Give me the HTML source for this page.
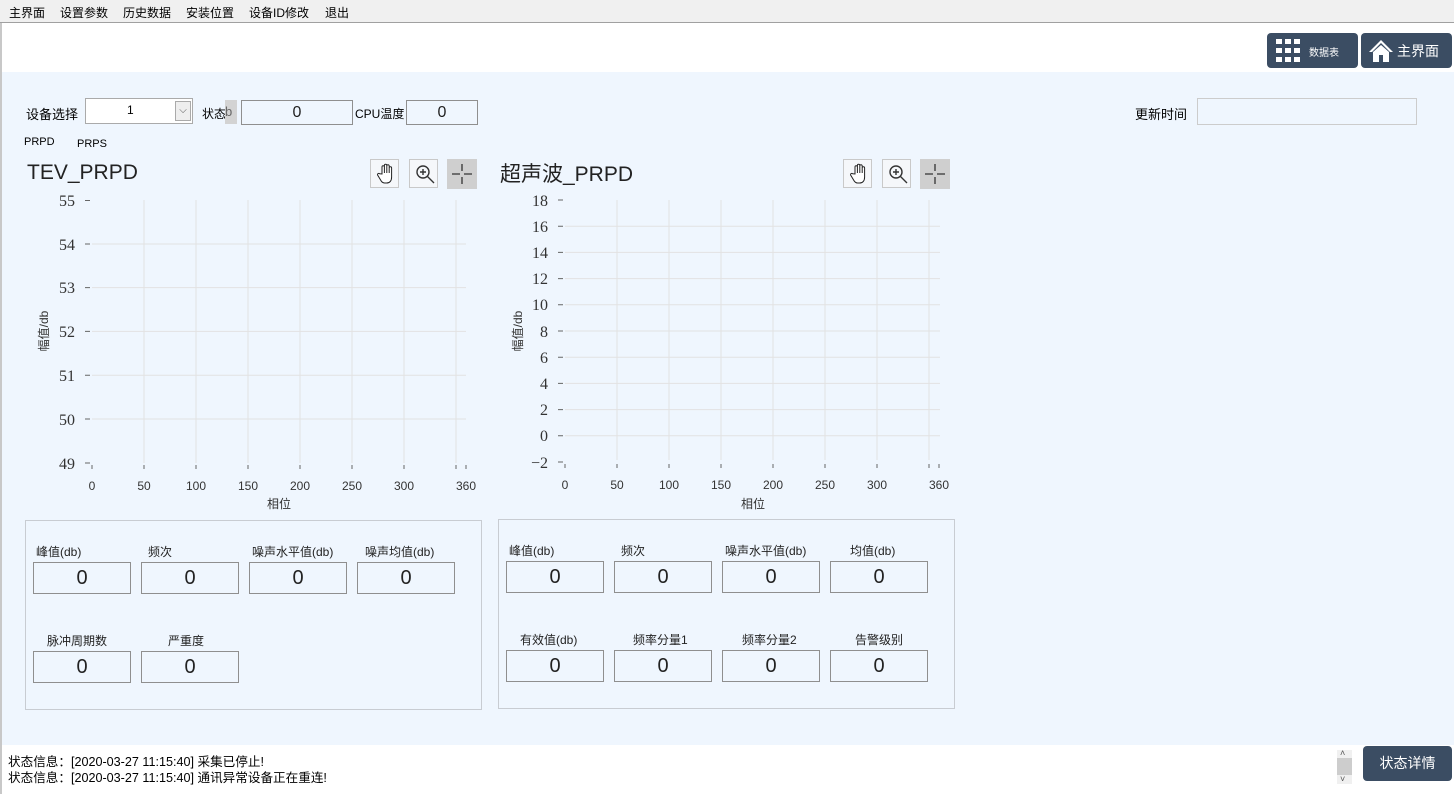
<!DOCTYPE html>
<html><head><meta charset="utf-8"><style>
*{margin:0;padding:0;box-sizing:border-box}
body{width:1454px;height:794px;overflow:hidden;background:#fff;font-family:"Liberation Sans","Noto Sans CJK SC",sans-serif;font-size:12px;color:#000;position:relative}
.abs{position:absolute}
#menu{left:0;top:0;width:1454px;height:23px;background:#f0f0f0;border-bottom:1px solid #a0a0a0}
#menu span{position:absolute;top:4px;font-size:12px}
#main{left:2px;top:72px;width:1452px;height:673px;background:#eff6fe}
.btn{background:#3b4d63;border-radius:4px;color:#fff}
.box{border:1px solid #8f8f8f;background:#eff6fe;text-align:center;font-size:20px;line-height:30px;color:#222;width:98px;height:32px}
.lbl{font-size:12px;color:#222}
.panel{border:1px solid #c8ccd2}
.tb{width:29px;height:29px;border:1px solid #c9c9c9;background:#f5f7fa}
</style></head><body>
<div id="menu" class="abs">
<span style="left:9px">主界面</span><span style="left:60px">设置参数</span><span style="left:123px">历史数据</span><span style="left:186px">安装位置</span><span style="left:249px">设备ID修改</span><span style="left:325px">退出</span>
</div>
<div class="abs" style="left:0;top:23px;width:2px;height:771px;background:#c8c8c8"></div>
<div id="main" class="abs"></div>
<div class="abs btn" style="left:1267px;top:33px;width:91px;height:35px">
<svg class="abs" style="left:9px;top:6px" width="24" height="24"><g fill="#fff"><rect x="0" y="0" width="6" height="5"/><rect x="9" y="0" width="6" height="5"/><rect x="18" y="0" width="6" height="5"/><rect x="0" y="9" width="6" height="5"/><rect x="9" y="9" width="6" height="5"/><rect x="18" y="9" width="6" height="5"/><rect x="0" y="18" width="6" height="5"/><rect x="9" y="18" width="6" height="5"/><rect x="18" y="18" width="6" height="5"/></g></svg>
<span class="abs" style="left:42px;top:11px;font-size:10px">数据表</span></div>
<div class="abs btn" style="left:1361px;top:33px;width:91px;height:35px">
<svg class="abs" style="left:7px;top:6px" width="26" height="24"><path d="M13 1 L1 13 L4 13 L13 4 L22 13 L25 13 Z" fill="#fff"/><path d="M5 13 L13 6 L21 13 L21 23 L15 23 L15 16 L11 16 L11 23 L5 23 Z" fill="#fff"/></svg>
<span class="abs" style="left:36px;top:8px;font-size:14px">主界面</span></div>
<span class="abs" style="left:26px;top:104px;font-size:13px">设备选择</span>
<div class="abs" style="left:85px;top:98px;width:108px;height:26px;border:1px solid #aaa;background:#fff"><span class="abs" style="left:41px;top:4px">1</span>
<div class="abs" style="left:89px;top:2px;width:16px;height:20px;border:1px solid #aaa;background:#eee;font-size:10px;text-align:center;line-height:18px;color:#555">⌵</div></div>
<span class="abs" style="left:202px;top:105px">状态</span><div class="abs" style="left:225px;top:100px;width:12px;height:24px;background:#d3d3d3;color:#666;font-size:13px;line-height:24px">b</div>
<div class="abs box" style="left:241px;top:100px;width:112px;height:25px;line-height:24px;font-size:16px">0</div>
<span class="abs" style="left:355px;top:105px">CPU温度</span>
<div class="abs box" style="left:406px;top:100px;width:72px;height:25px;line-height:24px;font-size:16px">0</div>
<span class="abs" style="left:1135px;top:104px;font-size:13px">更新时间</span>
<div class="abs" style="left:1197px;top:98px;width:220px;height:27px;border:1px solid #ccc;background:#eff6fe"></div>
<span class="abs" style="left:24px;top:136px;font-size:11px">PRPD</span><span class="abs" style="left:77px;top:138px;font-size:11px">PRPS</span>
<span class="abs" style="left:27px;top:161px;font-size:21px;color:#222">TEV_PRPD</span>
<span class="abs" style="left:500px;top:158px;font-size:21px;color:#222">超声波_PRPD</span>
<div class="abs tb" style="left:370px;top:159px"></div><div class="abs tb" style="left:409px;top:159px"></div><div class="abs" style="left:447px;top:159px;width:30px;height:30px;background:#cfcfcf"></div>
<div class="abs tb" style="left:843px;top:159px"></div><div class="abs tb" style="left:882px;top:159px"></div><div class="abs" style="left:920px;top:159px;width:30px;height:30px;background:#cfcfcf"></div>
<svg class="abs" style="left:0;top:0" width="1454" height="794">
<defs><g id="hand" fill="#fff" stroke="#222" stroke-width="1"><path d="M6 11 V4 a1.2 1.2 0 0 1 2.4 0 V10 V2.5 a1.2 1.2 0 0 1 2.4 0 V10 V3 a1.2 1.2 0 0 1 2.4 0 V10 V5 a1.2 1.2 0 0 1 2.4 0 V14 c0 4 -2 6 -5 6 h-2 c-2 0 -3 -1 -4 -3 l-3 -5 a1.2 1.2 0 0 1 2 -1.2 z"/></g>
<g id="zoom" fill="none" stroke="#333" stroke-width="1.4"><circle cx="8" cy="8" r="6"/><path d="M12.5 12.5 L19 19 M5 8 H11 M8 5 V11"/></g>
<g id="cross" stroke="#333" stroke-width="1.3"><path d="M0 10 H8 M12 10 H20 M10 0 V7 M10 13 V20"/></g></defs>
<use href="#hand" x="376" y="163"/><use href="#zoom" x="415" y="164"/><use href="#cross" x="452" y="164"/>
<use href="#hand" x="849" y="163"/><use href="#zoom" x="888" y="164"/><use href="#cross" x="925" y="164"/>
<g stroke="#e2e2e2" stroke-width="1">
<path d="M92 244H466M92 287.6H466M92 331.4H466M92 375.2H466M92 419H466"/>
<path d="M144 200V463M196 200V463M248 200V463M300 200V463M352 200V463M404 200V463M456 200V463"/>
<path d="M565 226.2H940M565 252.4H940M565 278.6H940M565 304.8H940M565 331H940M565 357.2H940M565 383.4H940M565 409.6H940M565 435.8H940"/>
<path d="M617 200V460M669 200V460M721 200V460M773 200V460M825 200V460M877 200V460M929 200V460"/>
</g>
<g stroke="#666" stroke-width="1">
<path d="M85 200.5h5M85 244h5M85 287.6h5M85 331.4h5M85 375.2h5M85 419h5M85 463h5"/>
<path d="M92 465v4M144 465v4M196 465v4M248 465v4M300 465v4M352 465v4M404 465v4M456 465v4M466 465v4"/>
<path d="M558 200h5M558 226.2h5M558 252.4h5M558 278.6h5M558 304.8h5M558 331h5M558 357.2h5M558 383.4h5M558 409.6h5M558 435.8h5M558 462h5"/>
<path d="M565 464v4M617 464v4M669 464v4M721 464v4M773 464v4M825 464v4M877 464v4M929 464v4M939 464v4"/>
</g>
<g font-family="Liberation Serif,serif" font-size="16" fill="#333" text-anchor="end">
<text x="75" y="206">55</text><text x="75" y="250">54</text><text x="75" y="293">53</text><text x="75" y="337">52</text><text x="75" y="381">51</text><text x="75" y="425">50</text><text x="75" y="469">49</text>
<text x="548" y="206">18</text><text x="548" y="232">16</text><text x="548" y="258">14</text><text x="548" y="284">12</text><text x="548" y="310">10</text><text x="548" y="337">8</text><text x="548" y="363">6</text><text x="548" y="389">4</text><text x="548" y="415">2</text><text x="548" y="441">0</text><text x="548" y="468">−2</text>
</g>
<g font-size="12" fill="#333" text-anchor="middle">
<text x="92" y="490">0</text><text x="144" y="490">50</text><text x="196" y="490">100</text><text x="248" y="490">150</text><text x="300" y="490">200</text><text x="352" y="490">250</text><text x="404" y="490">300</text><text x="466" y="490">360</text>
<text x="279" y="508">相位</text>
<text x="565" y="489">0</text><text x="617" y="489">50</text><text x="669" y="489">100</text><text x="721" y="489">150</text><text x="773" y="489">200</text><text x="825" y="489">250</text><text x="877" y="489">300</text><text x="939" y="489">360</text>
<text x="753" y="508">相位</text>
<text transform="translate(48,331) rotate(-90)">幅值/db</text>
<text transform="translate(522,331) rotate(-90)">幅值/db</text>
</g>
</svg>
<div class="abs panel" style="left:25px;top:520px;width:457px;height:190px"></div>
<div class="abs panel" style="left:498px;top:519px;width:457px;height:190px"></div>
<span class="abs lbl" style="left:36px;top:543px">峰值(db)</span><span class="abs lbl" style="left:148px;top:543px">频次</span><span class="abs lbl" style="left:252px;top:543px">噪声水平值(db)</span><span class="abs lbl" style="left:365px;top:543px">噪声均值(db)</span>
<div class="abs box" style="left:33px;top:562px">0</div><div class="abs box" style="left:141px;top:562px">0</div><div class="abs box" style="left:249px;top:562px">0</div><div class="abs box" style="left:357px;top:562px">0</div>
<span class="abs lbl" style="left:47px;top:632px">脉冲周期数</span><span class="abs lbl" style="left:168px;top:632px">严重度</span>
<div class="abs box" style="left:33px;top:651px">0</div><div class="abs box" style="left:141px;top:651px">0</div>
<span class="abs lbl" style="left:509px;top:542px">峰值(db)</span><span class="abs lbl" style="left:621px;top:542px">频次</span><span class="abs lbl" style="left:725px;top:542px">噪声水平值(db)</span><span class="abs lbl" style="left:850px;top:542px">均值(db)</span>
<div class="abs box" style="left:506px;top:561px">0</div><div class="abs box" style="left:614px;top:561px">0</div><div class="abs box" style="left:722px;top:561px">0</div><div class="abs box" style="left:830px;top:561px">0</div>
<span class="abs lbl" style="left:520px;top:631px">有效值(db)</span><span class="abs lbl" style="left:633px;top:631px">频率分量1</span><span class="abs lbl" style="left:742px;top:631px">频率分量2</span><span class="abs lbl" style="left:855px;top:631px">告警级别</span>
<div class="abs box" style="left:506px;top:650px">0</div><div class="abs box" style="left:614px;top:650px">0</div><div class="abs box" style="left:722px;top:650px">0</div><div class="abs box" style="left:830px;top:650px">0</div>
<span class="abs" style="left:8px;top:751px;font-size:12.6px">状态信息：[2020-03-27 11:15:40] 采集已停止!</span>
<span class="abs" style="left:8px;top:767px;font-size:12.6px">状态信息：[2020-03-27 11:15:40] 通讯异常设备正在重连!</span>
<div class="abs" style="left:1337px;top:750px;width:15px;height:34px;background:#f0f0f0"><div class="abs" style="left:0;top:8px;width:15px;height:17px;background:#cdcdcd"></div><span class="abs" style="left:3px;top:-2px;font-size:9px;color:#555">˄</span><span class="abs" style="left:3px;top:24px;font-size:9px;color:#555">˅</span></div>
<div class="abs btn" style="left:1363px;top:746px;width:89px;height:35px;text-align:center;line-height:35px;font-size:14px;color:#fff">状态详情</div>
</body></html>
